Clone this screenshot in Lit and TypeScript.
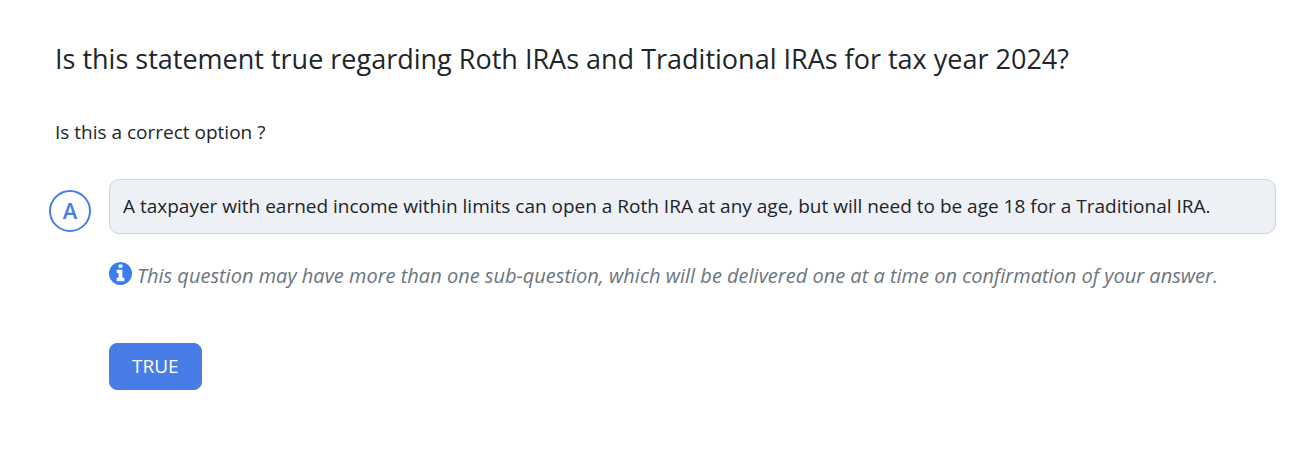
import { LitElement, html, css } from "lit";
import { customElement } from "lit/decorators.js";

@customElement("app-root")
export class AppRoot extends LitElement {
  static styles = css`
    :host {
      display: block;
      box-sizing: border-box;
      min-height: 100vh;
      padding: 39px 32px 40px 49px;
      background: #fff;
      color: #212529;
      font: 19px/28px "Open Sans", sans-serif;
    }
    h1 {
      margin: 0 0 0 6px;
      font-size: 27px;
      line-height: 40px;
      font-weight: 400;
    }
    .prompt {
      margin: 39px 0 0 6px;
    }
    .grid {
      display: grid;
      grid-template-columns: 42px minmax(0, 1fr);
      column-gap: 18px;
      align-items: center;
      margin-top: 33px;
    }
    .letter {
      box-sizing: border-box;
      width: 42px;
      height: 42px;
      margin-top: 8px;
      border: 2px solid #487de7;
      border-radius: 50%;
      color: #487de7;
      font-size: 22px;
      line-height: 36px;
      font-weight: 600;
      text-align: center;
    }
    .option {
      padding: 13px;
      border: 1px solid #ced4da;
      border-radius: 10px;
      background: #edf0f5;
      line-height: 27px;
    }
    .below {
      grid-column: 2;
    }
    .note {
      display: flex;
      align-items: flex-start;
      gap: 5px;
      margin: 28px 0 0;
      color: #6c757d;
      font-size: 20px;
      font-style: italic;
    }
    .note svg {
      flex: none;
      width: 23px;
      height: 23px;
    }
    button {
      justify-self: start;
      margin-top: 53px;
      padding: 9px 22px;
      border: 1px solid #487de7;
      border-radius: 8px;
      background: #487de7;
      color: #fff;
      font: inherit;
      line-height: 27px;
      cursor: pointer;
    }
  `;

  render() {
    return html`
      <main>
        <h1>Is this statement true regarding Roth IRAs and Traditional IRAs for tax year 2024?</h1>
        <p class="prompt">Is this a correct option ?</p>
        <div class="grid">
          <div class="letter">A</div>
          <div class="option">A taxpayer with earned income within limits can open a Roth IRA at any age, but will need to be age 18 for a Traditional IRA.</div>
          <p class="below note">
            <svg viewBox="128 128 1536 1536" aria-hidden="true">
              <path fill="#3b7cf0" d="M1152 1376v-160q0-14-9-23t-23-9h-96v-512q0-14-9-23t-23-9h-320q-14 0-23 9t-9 23v160q0 14 9 23t23 9h96v320h-96q-14 0-23 9t-9 23v160q0 14 9 23t23 9h448q14 0 23-9t9-23zm-128-896v-160q0-14-9-23t-23-9h-192q-14 0-23 9t-9 23v160q0 14 9 23t23 9h192q14 0 23-9t9-23zm640 416q0 209-103 385.5t-279.5 279.5-385.5 103-385.5-103-279.5-279.5-103-385.5 103-385.5 279.5-279.5 385.5-103 385.5 103 279.5 279.5 103 385.5z" />
            </svg>
            <span>This question may have more than one sub-question, which will be delivered one at a time on confirmation of your answer.</span>
          </p>
          <button class="below" type="button">TRUE</button>
        </div>
      </main>
    `;
  }
}
